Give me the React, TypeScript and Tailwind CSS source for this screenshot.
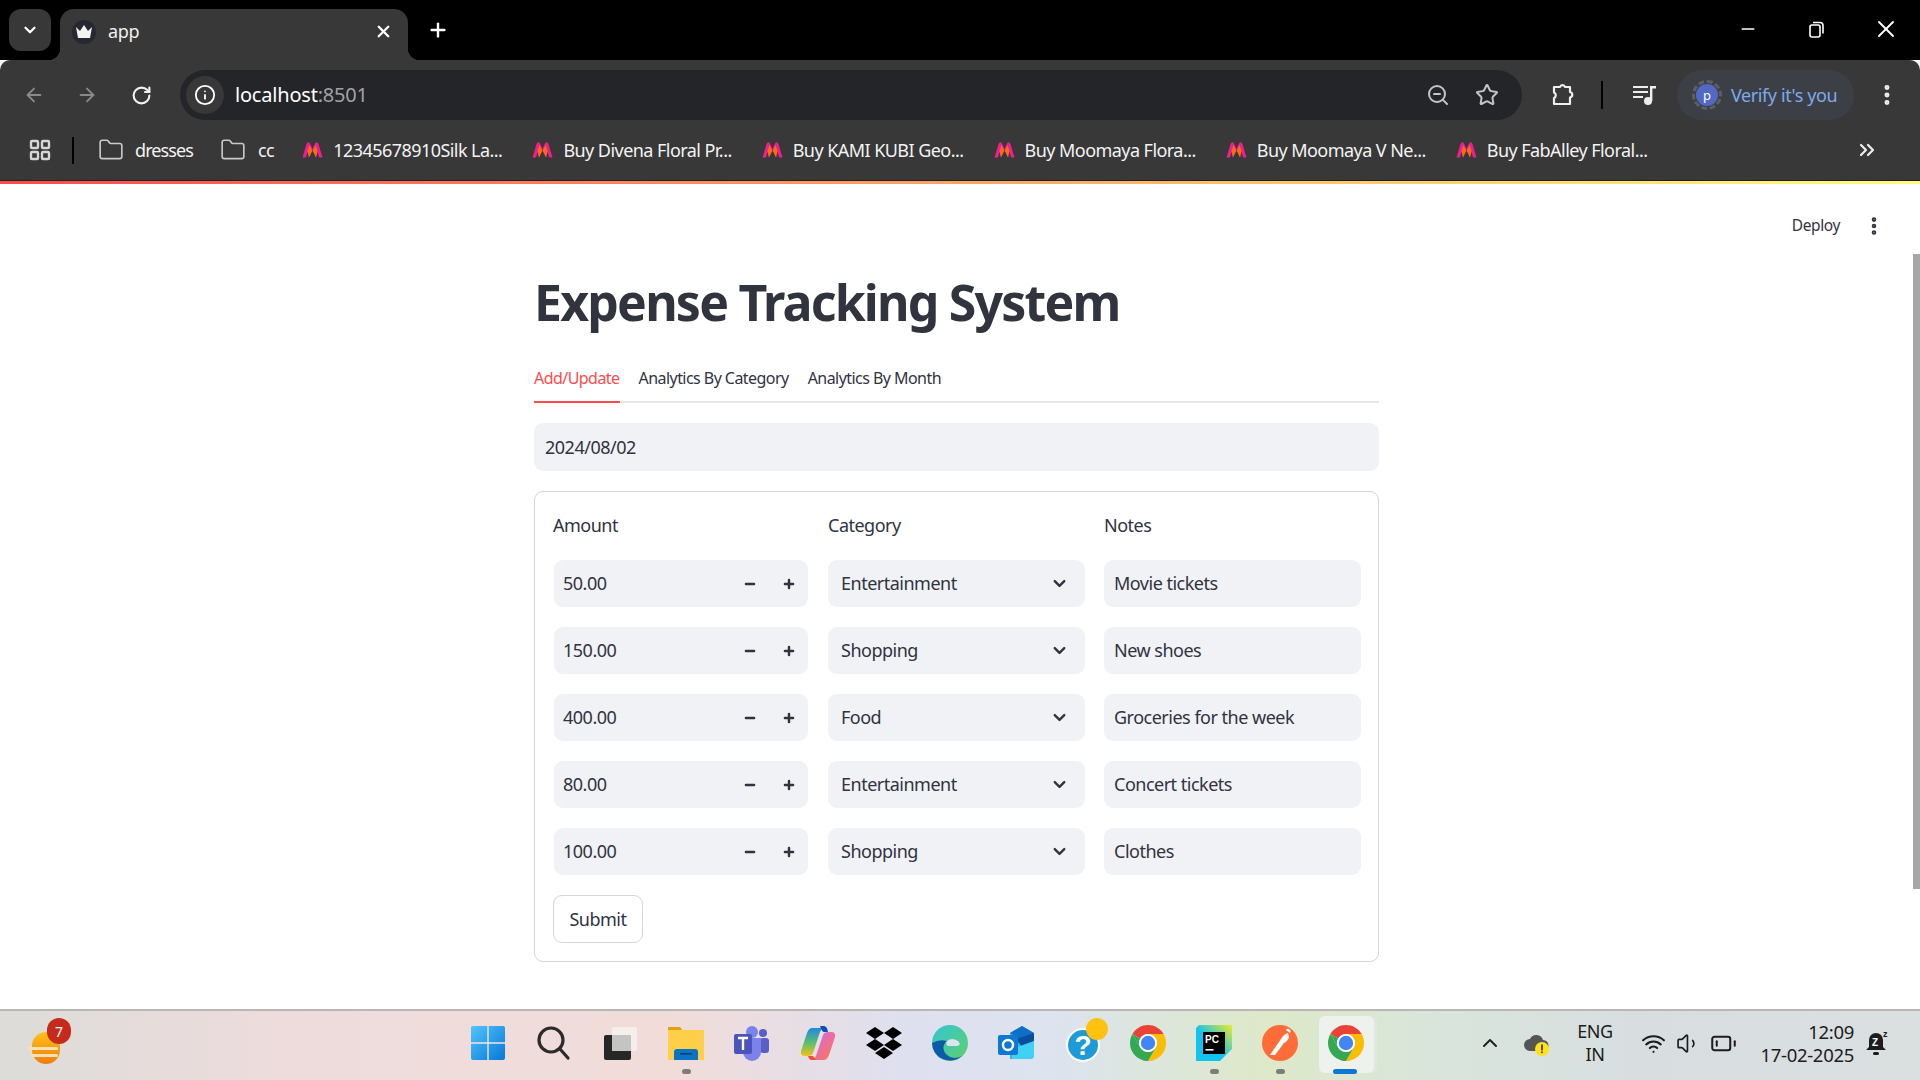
import { ChevronDown, Plus, Minus, X, ArrowLeft, ArrowRight, RotateCw, Info, ZoomOut, Star, EllipsisVertical, ChevronsRight, ChevronUp, Folder, LayoutGrid, Wifi, Volume1, BatteryLow } from 'lucide-react'

const rows = [
  { amount: '50.00', category: 'Entertainment', notes: 'Movie tickets' },
  { amount: '150.00', category: 'Shopping', notes: 'New shoes' },
  { amount: '400.00', category: 'Food', notes: 'Groceries for the week' },
  { amount: '80.00', category: 'Entertainment', notes: 'Concert tickets' },
  { amount: '100.00', category: 'Shopping', notes: 'Clothes' },
]

const bookmarks = [
  '12345678910Silk La...',
  'Buy Divena Floral Pr...',
  'Buy KAMI KUBI Geo...',
  'Buy Moomaya Flora...',
  'Buy Moomaya V Ne...',
  'Buy FabAlley Floral...',
]

function MyntraLogo() {
  return (
    <svg width="21" height="18" viewBox="0 0 21 18" className="shrink-0">
      <path d="M0.5 16.5 L4.5 3 Q6 0 8 2.5 L10.5 8 L7 16.5 L5.5 11 L4 16.5 Z" fill="#ec1f8e" />
      <path d="M20.5 16.5 L16.5 3 Q15 0 13 2.5 L10.5 8 L14 16.5 L15.5 11 L17 16.5 Z" fill="#ec1f8e" />
      <path d="M5.5 10 L7.5 4 L10.5 10 L13.5 4 L15.5 10 L14 16.5 L10.5 9.5 L7 16.5 Z" fill="#f56a1c" />
    </svg>
  )
}

function ChromeLogo({ size = 36 }: { size?: number }) {
  return (
    <svg width={size} height={size} viewBox="4 4 40 40">
      <path d="M6.68 14 A20 20 0 0 1 41.32 14 H24 A10 10 0 0 0 15.34 19 Z" fill="#ea4335" />
      <path d="M41.32 14 A20 20 0 0 1 24 44 L32.66 29 A10 10 0 0 0 24 14 Z" fill="#fbbc04" />
      <path d="M24 44 A20 20 0 0 1 6.68 14 L15.34 29 A10 10 0 0 0 32.66 29 Z" fill="#34a853" />
      <path d="M6.68 14 L15.34 29 A10 10 0 0 1 15.34 19 Z" fill="#34a853" />
      <circle cx="24" cy="24" r="10" fill="#fff" />
      <circle cx="24" cy="24" r="8" fill="#4285f4" />
    </svg>
  )
}

function TaskIcon({ children, dot, active }: { children: React.ReactNode; dot?: boolean; active?: boolean }) {
  return (
    <div className="relative flex h-[61px] w-[66px] shrink-0 items-center justify-center">
      {active && <div className="absolute left-[6px] top-[3px] h-[57px] w-[55px] rounded-[6px] bg-[#edf2ec] shadow-[3px_0_0_#dfe8df]" />}
      <div className="relative flex h-[36px] w-[36px] items-center justify-center">{children}</div>
      {dot && <div className="absolute bottom-0 left-[29px] h-[5px] w-[9px] rounded-full bg-[#7d7d7d]" />}
      {active && <div className="absolute bottom-0 left-[20px] h-[5px] w-[24px] rounded-full bg-[#0a78d4]" />}
    </div>
  )
}

function NumberRow({ value }: { value: string }) {
  return (
    <div className="mx-[1px] flex h-[47px] items-center rounded-[9px] bg-[#f0f2f6] pl-[9px] text-[18px] text-[#31333f]">
      <span className="flex-1">{value}</span>
      <Minus size={14} strokeWidth={4.2} className="mr-[25px]" />
      <Plus size={14} strokeWidth={4.2} className="mr-[12px]" />
    </div>
  )
}

function SelectRow({ value }: { value: string }) {
  return (
    <div className="flex h-[47px] items-center rounded-[9px] bg-[#f0f2f6] pl-[13px] pr-[16px] text-[18px] text-[#31333f]">
      <span className="flex-1">{value}</span>
      <ChevronDown size={19} strokeWidth={3} />
    </div>
  )
}

export default function App() {
  return (
    <div className="flex h-screen w-[1920px] flex-col overflow-hidden bg-white font-['Noto_Sans',sans-serif]">
      {/* tab strip */}
      <div className="flex h-[60px] shrink-0 items-start bg-black pl-[9px] pt-[9px]">
        <div className="flex h-[42px] w-[42px] items-center justify-center rounded-[12px] bg-[#383838] text-white">
          <ChevronDown size={18} strokeWidth={3} />
        </div>
        <div className="relative ml-[9px] flex h-[51px] w-[348px] items-center rounded-t-[14px] bg-[#383838] pb-[6px] pl-[12px] pr-[15px] text-white">
          <div className="flex h-[24px] w-[24px] items-center justify-center rounded-full bg-[#262730]">
            <svg width="18" height="14" viewBox="0 0 18 14">
              <path d="M1 2 L5 6 L9 0 L13 6 L17 2 L15 13 H3 Z" fill="#f4f4f4" />
            </svg>
          </div>
          <span className="ml-[12px] flex-1 text-[18px] tracking-[-0.3px] text-[#f1f1f1]">app</span>
          <X size={19} strokeWidth={3} />
          <div className="absolute -left-[12px] bottom-0 h-[12px] w-[12px] bg-[radial-gradient(circle_at_0_0,#000_12px,#383838_12.5px)]" />
          <div className="absolute -right-[12px] bottom-0 h-[12px] w-[12px] bg-[radial-gradient(circle_at_100%_0,#000_12px,#383838_12.5px)]" />
        </div>
        <Plus size={22} strokeWidth={2.6} className="ml-[19px] mt-[10px] text-white" />
        <div className="flex-1" />
        <Minus size={20} strokeWidth={1.6} className="mr-[50px] mt-[10px] text-white" />
        <svg width="18" height="18" viewBox="0 0 18 18" fill="none" stroke="#fff" strokeWidth="1.6" className="mr-[46px] mt-[11px]">
          <rect x="2" y="5" width="10" height="12" rx="2" />
          <path d="M5 2.5 h7 a3 3 0 0 1 3 3 v8" />
        </svg>
        <X size={28} strokeWidth={1.6} className="mr-[20px] mt-[6px] text-white" />
      </div>

      {/* toolbar */}
      <div className="flex h-[60px] shrink-0 items-center rounded-t-[10px] bg-[#383838] pl-[23px] pr-[25px] pt-[10px]">
        <ArrowLeft size={22} strokeWidth={2} className="shrink-0 text-[#8a8a8a]" />
        <ArrowRight size={22} strokeWidth={2} className="ml-[31px] shrink-0 text-[#8a8a8a]" />
        <RotateCw size={21} strokeWidth={2.4} className="ml-[33px] shrink-0 text-[#f1f1f1]" />
        <div className="ml-[28px] flex h-[50px] w-[1342px] shrink-0 items-center rounded-full bg-[#242528] pl-[6px] pr-[23px]">
          <div className="flex h-[38px] w-[38px] items-center justify-center rounded-full bg-[#383838]">
            <Info size={22} strokeWidth={2} className="text-white" />
          </div>
          <span className="ml-[11px] flex-1 text-[20px] tracking-[-0.2px] text-white">
            localhost<span className="text-[#a2a2a2]">:8501</span>
          </span>
          <ZoomOut size={24} strokeWidth={2} className="mr-[25px] text-[#c4c4c4]" />
          <Star size={24} strokeWidth={2} className="text-[#c4c4c4]" />
        </div>
        <svg width="26" height="26" viewBox="0 0 26 26" fill="none" stroke="#eeeeee" strokeWidth="2.2" strokeLinejoin="round" className="ml-[28px] shrink-0">
          <path d="M4 5 H10 a2.6 2.6 0 0 1 5 0 H20 V10 a2.8 2.8 0 0 1 0 5.5 V22 H4 V16 a3 3 0 0 0 0 -5.5 Z" />
        </svg>
        <div className="ml-[25px] h-[28px] w-[2px] shrink-0 bg-black" />
        <svg width="24" height="22" viewBox="0 0 24 22" className="ml-[30px] shrink-0" fill="#eeeeee">
          <rect x="0" y="2" width="15" height="2" />
          <rect x="0" y="7" width="15" height="2" />
          <rect x="0" y="12" width="10" height="2" />
          <rect x="17" y="2" width="6" height="2.5" />
          <rect x="17" y="2" width="2.4" height="15" />
          <circle cx="15" cy="17" r="4" />
        </svg>
        <div className="ml-[20px] flex h-[50px] w-[177px] shrink-0 items-center rounded-full bg-[#3c4046] pl-[15px]">
          <div className="flex h-[30px] w-[30px] items-center justify-center rounded-full border-[3px] border-dashed border-[#5d5f63]">
            <div className="flex h-[22px] w-[22px] items-center justify-center rounded-full bg-[#5268c4] text-[13px] leading-none text-white">p</div>
          </div>
          <span className="ml-[9px] whitespace-nowrap text-[18px] tracking-[-0.4px] text-[#7ea9ee]">Verify it's you</span>
        </div>
        <EllipsisVertical size={26} strokeWidth={2.6} className="ml-[20px] shrink-0 text-[#eeeeee]" />
      </div>

      {/* bookmarks */}
      <div className="flex h-[60px] shrink-0 items-center bg-[#383838] pl-[28px] pr-[41px] text-[18px] tracking-[-0.55px] text-[#f3f3f3]">
        <LayoutGrid size={24} strokeWidth={2.4} className="text-[#d6d6d6]" />
        <div className="ml-[20px] h-[27px] w-[2px] bg-black" />
        <Folder size={26} strokeWidth={1.5} className="ml-[24px] text-[#c9c9c9]" />
        <span className="ml-[11px] tracking-[-0.9px]">dresses</span>
        <Folder size={26} strokeWidth={1.5} className="ml-[27px] text-[#c9c9c9]" />
        <span className="ml-[12px]">cc</span>
        {bookmarks.map((label, i) => (
          <div key={label} className={`flex items-center ${i === 0 ? 'ml-[28px]' : 'ml-[30px]'}`}>
            <MyntraLogo />
            <span className="ml-[10px] whitespace-nowrap">{label}</span>
          </div>
        ))}
        <div className="flex-1" />
        <ChevronsRight size={24} strokeWidth={2.2} className="text-[#eeeeee]" />
      </div>
      <div className="h-[1px] shrink-0 bg-[#222222]" />
      <div className="h-[3px] shrink-0 bg-[linear-gradient(to_right,#ff4b4b,#fffd80)]" />

      {/* page */}
      <div className="relative flex flex-1 justify-center overflow-hidden pr-[7px] text-[#31333f]">
        <div className="absolute right-[35px] top-[30px] flex items-center gap-[23px] text-[15.5px] tracking-[-0.4px]">
          <span>Deploy</span>
          <EllipsisVertical size={22} strokeWidth={3} />
        </div>
        <div className="absolute right-0 top-[70px] h-[635px] w-[7px] bg-[#a8a8a8]" />

        <div className="w-[845px]">
          <h1 className="mt-[75px] h-[86px] text-[50px] font-bold leading-[86px] tracking-[-1.8px]">Expense Tracking System</h1>
          <div className="mt-[10px] flex h-[48px] gap-[19px] border-b-2 border-[#e6e7ea] text-[16px] tracking-[-0.55px]">
            <div className="-mb-[2px] flex items-center border-b-2 border-[#ff4b4b] text-[#ff4b4b]">Add/Update</div>
            <div className="flex items-center">Analytics By Category</div>
            <div className="flex items-center">Analytics By Month</div>
          </div>
          <div className="mt-[20px] flex h-[48px] items-center rounded-[9px] bg-[#f0f2f6] pl-[11px] text-[18px] tracking-[-0.5px]">2024/08/02</div>

          <div className="mt-[20px] h-[471px] rounded-[9px] border border-[#d6d6d9] px-[18px] pt-[18px]">
            <div className="grid grid-cols-[256px_257px_257px] gap-x-[19px] text-[18px] tracking-[-0.5px]">
              <div className="flex h-[30px] items-center">Amount</div>
              <div className="flex h-[30px] items-center">Category</div>
              <div className="flex h-[30px] items-center">Notes</div>
            </div>
            <div className="mt-[20px] flex flex-col gap-[20px] tracking-[-0.5px]">
              {rows.map((row) => (
                <div key={row.amount} className="grid grid-cols-[256px_257px_257px] gap-x-[19px]">
                  <NumberRow value={row.amount} />
                  <SelectRow value={row.category} />
                  <div className="flex h-[47px] items-center rounded-[9px] bg-[#f0f2f6] pl-[10px] text-[18px]">{row.notes}</div>
                </div>
              ))}
            </div>
            <button className="mt-[20px] h-[48px] w-[90px] rounded-[9px] border border-[#d6d6d9] text-[18px] tracking-[-0.5px]">Submit</button>
          </div>
        </div>
      </div>

      {/* taskbar */}
      <div className="flex h-[71px] shrink-0 items-center border-t-2 border-[#b9b6b3] bg-[linear-gradient(to_right,#dcdcd8_0%,#eedcdd_15%,#f1dcd9_35%,#dfe0ef_47%,#dde3ef_55%,#dde9c8_66%,#d9e5dc_75%,#d8dee0_85%,#dadfe0_100%)] pb-[5px] pl-[28px]">
        <div className="relative h-[42px] w-[42px] shrink-0">
          <div className="absolute bottom-0 left-[4px] h-[32px] w-[28px] rounded-full bg-[linear-gradient(#ffc21a,#f07c0a)]" />
          <div className="absolute bottom-[14px] left-0 h-[3px] w-[30px] rounded-full bg-[#f4e2b6]" />
          <div className="absolute bottom-[7px] left-[2px] h-[3px] w-[28px] rounded-full bg-[#f4e2b6]" />
          <div className="absolute -top-[4px] left-[19px] flex h-[26px] w-[24px] items-center justify-center rounded-full bg-[#c42b1c] text-[14px] text-white">7</div>
        </div>
        <div className="ml-[385px] flex items-center">
          <TaskIcon>
            <svg width="36" height="36" viewBox="0 0 36 36">
              <defs>
                <linearGradient id="win" x1="0" y1="0" x2="1" y2="1">
                  <stop offset="0" stopColor="#52c4fb" />
                  <stop offset="1" stopColor="#0778d8" />
                </linearGradient>
              </defs>
              <rect x="1" y="1" width="34" height="34" rx="2" fill="url(#win)" />
              <path d="M18 1 V35 M1 18 H35" stroke="#f3e6e4" strokeWidth="1.4" />
            </svg>
          </TaskIcon>
          <TaskIcon>
            <svg width="36" height="36" viewBox="0 0 36 36" fill="none" stroke="#2b2b2b" strokeWidth="3.2" strokeLinecap="round">
              <circle cx="15" cy="15" r="12" />
              <path d="M24 24 L32 33" />
            </svg>
          </TaskIcon>
          <TaskIcon>
            <svg width="36" height="36" viewBox="0 0 36 36">
              <rect x="2" y="10" width="27" height="25" rx="2" fill="#272727" />
              <rect x="10" y="2" width="25" height="24" rx="2" fill="#f4f1f0" fillOpacity="0.85" />
              <rect x="10" y="10" width="19" height="16" fill="#c4c4c2" />
            </svg>
          </TaskIcon>
          <TaskIcon dot>
            <svg width="36" height="36" viewBox="0 0 36 36">
              <path d="M0 2 H12 L15 6 H0 Z" fill="#e2a208" />
              <rect x="0" y="5" width="36" height="30" fill="#ffcf49" />
              <path d="M6 35 V27 Q6 24 9 24 H27 Q30 24 30 27 V35 Z" fill="#0a74c4" />
              <rect x="12" y="28" width="12" height="1.6" fill="#063f78" />
            </svg>
          </TaskIcon>
          <TaskIcon>
            <svg width="36" height="36" viewBox="0 0 36 36">
              <circle cx="29" cy="8" r="4" fill="#5a5fc6" />
              <circle cx="18" cy="7" r="6" fill="#7b83eb" />
              <rect x="26" y="13" width="9" height="15" rx="3" fill="#5a5fc6" />
              <path d="M9 13 H27 V27 A9 9 0 0 1 9 27 Z" fill="#7b83eb" />
              <rect x="0" y="9" width="18" height="20" rx="2" fill="#4b53bc" />
              <path d="M4 13 H14 M9 13 V25" stroke="#fff" strokeWidth="2.4" />
            </svg>
          </TaskIcon>
          <TaskIcon>
            <svg width="36" height="36" viewBox="0 0 36 36">
              <defs>
                <linearGradient id="copA" x1="0" y1="0" x2="0" y2="1">
                  <stop offset="0" stopColor="#1b8be0" />
                  <stop offset="0.55" stopColor="#5fc06a" />
                  <stop offset="1" stopColor="#f2c414" />
                </linearGradient>
                <linearGradient id="copB" x1="0" y1="0" x2="1" y2="1">
                  <stop offset="0" stopColor="#c26cf0" />
                  <stop offset="0.6" stopColor="#f0708c" />
                  <stop offset="1" stopColor="#f9803a" />
                </linearGradient>
              </defs>
              <path d="M12 3 H24 Q21 3 19 10 L13 28 Q12 31 8 31 H5 Q0 31 1 26 L7 8 Q9 3 12 3 Z" fill="url(#copA)" />
              <path d="M24 35 H12 Q15 35 17 28 L23 10 Q24 7 28 7 H31 Q36 7 35 12 L29 30 Q27 35 24 35 Z" fill="url(#copB)" />
              <path d="M20 1 H24 Q27 1 28 7 H24 Q22 7 20 1 Z" fill="#0d4fb5" />
              <path d="M16 35 H12 Q9 35 8 31 H12 Q14 31 16 35 Z" fill="#f0512a" />
            </svg>
          </TaskIcon>
          <TaskIcon>
            <svg width="36" height="36" viewBox="0 0 36 36" fill="#000">
              <path d="M9 2 L18 8 L9 14 L0 8 Z" />
              <path d="M27 2 L36 8 L27 14 L18 8 Z" />
              <path d="M9 14 L18 20 L9 26 L0 20 Z" />
              <path d="M27 14 L36 20 L27 26 L18 20 Z" />
              <path d="M18 22 L27 28 L18 34 L9 28 Z" />
            </svg>
          </TaskIcon>
          <TaskIcon>
            <svg width="36" height="36" viewBox="0 0 36 36">
              <defs>
                <linearGradient id="edge" x1="0" y1="0" x2="1" y2="1">
                  <stop offset="0" stopColor="#34c6d3" />
                  <stop offset="1" stopColor="#5fd06a" />
                </linearGradient>
              </defs>
              <circle cx="18" cy="18" r="18" fill="url(#edge)" />
              <path d="M0 18 A18 18 0 0 0 30 31 Q20 36 13 28 Q9 21 15 16 Q7 14 0 18 Z" fill="#0c5ba8" />
              <path d="M15 16 Q20 12 26 16 Q30 20 25 21 H16 Q13 19 15 16 Z" fill="#dde3ef" />
            </svg>
          </TaskIcon>
          <TaskIcon>
            <svg width="36" height="36" viewBox="0 0 36 36">
              <path d="M12 8 L24 1 L36 8 V30 Q36 34 32 34 H12 Z" fill="#2fb4ee" />
              <path d="M12 8 L24 1 L36 8 L24 16 Z" fill="#0f6fc6" />
              <path d="M18 14 L36 8 V16 L24 22 Z" fill="#0a4f9c" />
              <path d="M14 24 L36 16 V30 Q36 34 32 34 H14 Z" fill="#40d2f6" />
              <rect x="0" y="10" width="20" height="20" rx="2" fill="#0f78d4" />
              <circle cx="10" cy="20" r="5" fill="none" stroke="#fff" strokeWidth="2.4" />
            </svg>
          </TaskIcon>
          <TaskIcon>
            <svg width="36" height="36" viewBox="0 0 36 36" className="overflow-visible">
              <circle cx="19" cy="20" r="17" fill="#fff" />
              <circle cx="19" cy="20" r="15" fill="#1e9bd7" />
              <text x="19" y="30" textAnchor="middle" fontSize="28" fontWeight="700" fill="#fff" fontFamily="Liberation Sans, sans-serif">?</text>
              <circle cx="33" cy="4" r="11" fill="#ffc20e" />
            </svg>
          </TaskIcon>
          <TaskIcon>
            <ChromeLogo />
          </TaskIcon>
          <TaskIcon dot>
            <svg width="36" height="36" viewBox="0 0 36 36">
              <defs>
                <linearGradient id="pc" x1="0" y1="1" x2="1" y2="0">
                  <stop offset="0.45" stopColor="#12c3ef" />
                  <stop offset="1" stopColor="#f0ea24" />
                </linearGradient>
              </defs>
              <path d="M3 0 H36 V24 L24 36 H0 V3 Z" fill="url(#pc)" />
              <rect x="7" y="7" width="22" height="22" fill="#000" />
              <text x="9" y="18" fontSize="10" fontWeight="700" fill="#fff" fontFamily="Liberation Sans, sans-serif">PC</text>
              <rect x="9.5" y="24" width="8" height="1.6" fill="#fff" />
            </svg>
          </TaskIcon>
          <TaskIcon dot>
            <svg width="36" height="36" viewBox="0 0 36 36">
              <circle cx="18" cy="18" r="18" fill="#ff6c37" />
              <path d="M8 30 L19 14 Q22 9 26 8 L27 12 Q26 16 22 18 L13 30 Z M24 5 a2.4 2.4 0 1 1 4 3 Z" fill="#fff" />
            </svg>
          </TaskIcon>
          <TaskIcon active>
            <ChromeLogo />
          </TaskIcon>
        </div>
        <ChevronUp size={24} strokeWidth={2} className="ml-[99px] text-[#222]" />
        <svg width="28" height="28" viewBox="0 0 28 28" className="ml-[21px]">
          <path d="M7 22 a6 6 0 0 1 0-12 a7 7 0 0 1 13 1 a5 5 0 0 1 0 11 Z" fill="#555" />
          <circle cx="19" cy="20" r="7" fill="#ffe11a" />
          <rect x="18.2" y="15.5" width="1.6" height="6" fill="#333" />
          <rect x="18.2" y="22.5" width="1.6" height="1.6" fill="#333" />
        </svg>
        <div className="ml-[24px] w-[40px] text-center text-[18px] leading-[23px] tracking-[-0.5px] text-[#1c1c1c]">
          <div>ENG</div>
          <div>IN</div>
        </div>
        <Wifi size={25} strokeWidth={2} className="ml-[26px] text-[#1c1c1c]" />
        <Volume1 size={25} strokeWidth={1.6} className="ml-[10px] text-[#1c1c1c]" />
        <BatteryLow size={27} strokeWidth={1.8} className="ml-[9px] text-[#1c1c1c]" />
        <div className="ml-[21px] w-[96px] text-right text-[18.5px] leading-[23px] tracking-[-0.3px] text-[#1c1c1c]">
          <div>12:09</div>
          <div>17-02-2025</div>
        </div>
        <svg width="26" height="28" viewBox="0 0 26 28" className="ml-[10px]" fill="#1c1c1c">
          <path d="M12 4 a7 7 0 0 1 7 7 v7 l3 3 H2 l3-3 v-7 a7 7 0 0 1 7-7 Z" />
          <rect x="9" y="23" width="6" height="3" rx="1.5" />
          <text x="8" y="17" fontSize="10" fontWeight="700" fill="#fff" fontFamily="Liberation Sans, sans-serif">Z</text>
          <text x="19" y="8" fontSize="9" fontWeight="700" fontFamily="Liberation Sans, sans-serif">z</text>
        </svg>
      </div>
    </div>
  )
}
